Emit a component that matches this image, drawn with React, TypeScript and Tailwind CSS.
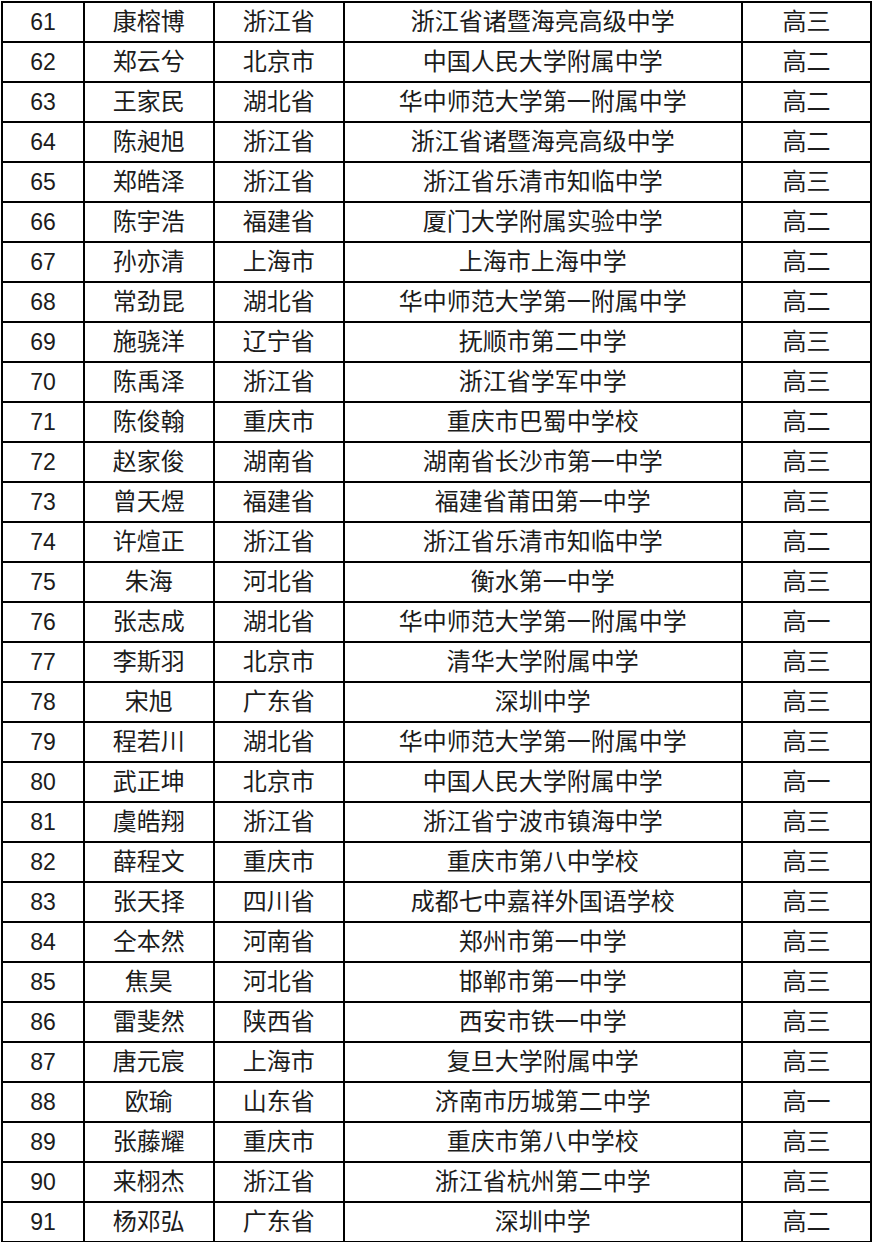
const rows: [string, string, string, string, string][] = [
  ["61", "康榕博", "浙江省", "浙江省诸暨海亮高级中学", "高三"],
  ["62", "郑云兮", "北京市", "中国人民大学附属中学", "高二"],
  ["63", "王家民", "湖北省", "华中师范大学第一附属中学", "高二"],
  ["64", "陈昶旭", "浙江省", "浙江省诸暨海亮高级中学", "高二"],
  ["65", "郑皓泽", "浙江省", "浙江省乐清市知临中学", "高三"],
  ["66", "陈宇浩", "福建省", "厦门大学附属实验中学", "高二"],
  ["67", "孙亦清", "上海市", "上海市上海中学", "高二"],
  ["68", "常劲昆", "湖北省", "华中师范大学第一附属中学", "高二"],
  ["69", "施骁洋", "辽宁省", "抚顺市第二中学", "高三"],
  ["70", "陈禹泽", "浙江省", "浙江省学军中学", "高三"],
  ["71", "陈俊翰", "重庆市", "重庆市巴蜀中学校", "高二"],
  ["72", "赵家俊", "湖南省", "湖南省长沙市第一中学", "高三"],
  ["73", "曾天煜", "福建省", "福建省莆田第一中学", "高三"],
  ["74", "许煊正", "浙江省", "浙江省乐清市知临中学", "高二"],
  ["75", "朱海", "河北省", "衡水第一中学", "高三"],
  ["76", "张志成", "湖北省", "华中师范大学第一附属中学", "高一"],
  ["77", "李斯羽", "北京市", "清华大学附属中学", "高三"],
  ["78", "宋旭", "广东省", "深圳中学", "高三"],
  ["79", "程若川", "湖北省", "华中师范大学第一附属中学", "高三"],
  ["80", "武正坤", "北京市", "中国人民大学附属中学", "高一"],
  ["81", "虞皓翔", "浙江省", "浙江省宁波市镇海中学", "高三"],
  ["82", "薛程文", "重庆市", "重庆市第八中学校", "高三"],
  ["83", "张天择", "四川省", "成都七中嘉祥外国语学校", "高三"],
  ["84", "仝本然", "河南省", "郑州市第一中学", "高三"],
  ["85", "焦昊", "河北省", "邯郸市第一中学", "高三"],
  ["86", "雷斐然", "陕西省", "西安市铁一中学", "高三"],
  ["87", "唐元宸", "上海市", "复旦大学附属中学", "高三"],
  ["88", "欧瑜", "山东省", "济南市历城第二中学", "高一"],
  ["89", "张藤耀", "重庆市", "重庆市第八中学校", "高三"],
  ["90", "来栩杰", "浙江省", "浙江省杭州第二中学", "高三"],
  ["91", "杨邓弘", "广东省", "深圳中学", "高二"],
];

const cellClasses = [
  "w-[82px] text-[23px]",
  "w-[130px] text-[24px]",
  "w-[130px] text-[24px]",
  "w-[399px] text-[24px]",
  "w-[129px] text-[24px]",
];

export default function App() {
  return (
    <div className="w-[872px] bg-white pt-px pl-px">
      <table className="border-collapse table-fixed text-[#1c1c1c] font-['Liberation_Sans','Noto_Sans_CJK_SC',sans-serif]">
        <tbody>
          {rows.map((r) => (
            <tr key={r[0]} className="h-[40px]">
              {r.map((cell, i) => (
                <td
                  key={i}
                  className={`${cellClasses[i]} border-2 border-black p-0 text-center align-middle leading-none`}
                >
                  {cell}
                </td>
              ))}
            </tr>
          ))}
        </tbody>
      </table>
    </div>
  );
}
